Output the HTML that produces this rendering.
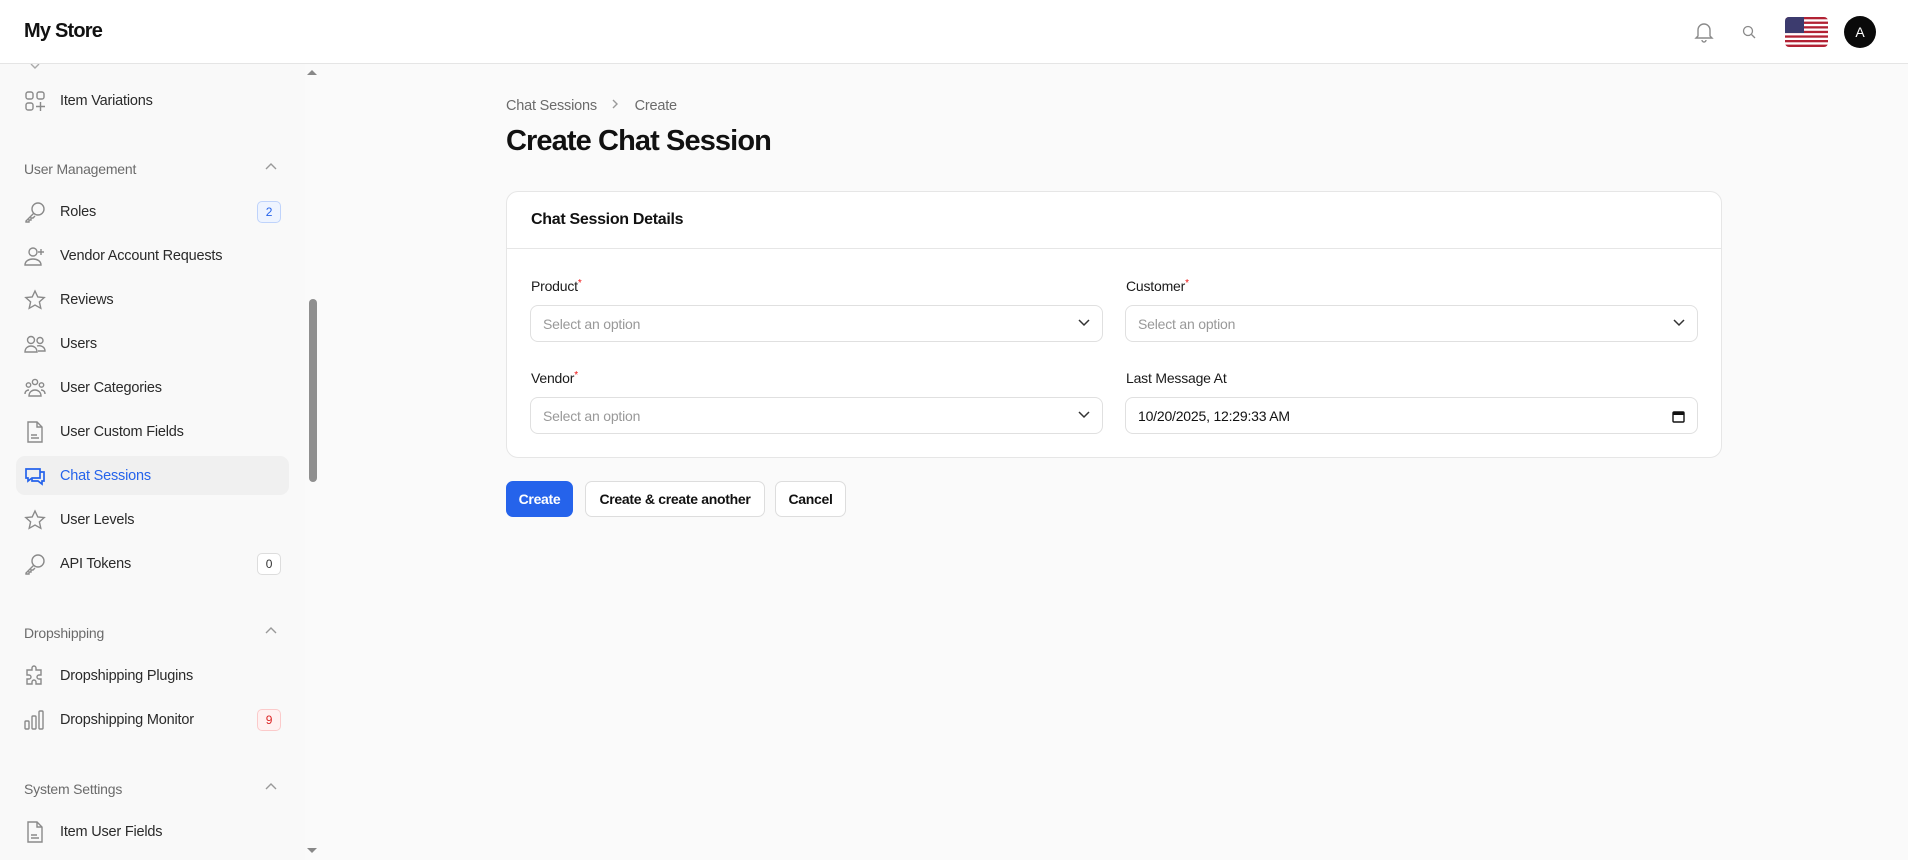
<!DOCTYPE html>
<html><head><meta charset="utf-8"><style>
*{box-sizing:border-box;margin:0;padding:0}
body{width:1908px;height:860px;overflow:hidden;background:#fafafa;font-family:"Liberation Sans",sans-serif;color:#111;position:relative}
.hdr{position:absolute;left:0;top:0;width:1908px;height:64px;background:#fff;border-bottom:1px solid #e5e5e5}
.logo{position:absolute;left:24px;top:20px;font-size:20px;font-weight:bold;letter-spacing:-0.8px}
.side{position:absolute;left:0;top:64px;width:305px;height:796px;background:#f9f9f9}
.sb{position:absolute;left:305px;top:64px;width:12px;height:796px;background:#fafafa}
.thumb{position:absolute;left:309px;top:299px;width:8px;height:183px;background:#8f8f8f;border-radius:4px}
.it{position:absolute;left:16px;width:273px;height:39px;font-size:14.5px;color:#2a2a2a;letter-spacing:-0.2px}
.it svg{position:absolute;left:8px;top:9px}
.it span{position:absolute;left:44px;top:12px}
.it.act{background:#f0f0f0;border-radius:9px;color:#2563eb}
.grp{position:absolute;left:24px;font-size:14px;color:#6b6b6b;letter-spacing:-0.2px}
.car{position:absolute;left:265px}
.badge{position:absolute;left:241px;top:9px;width:24px;height:22px;border:1px solid #ddd;border-radius:5px;font-size:12px;text-align:center;line-height:20px;color:#333;background:#fff}
.main{position:absolute;left:506px}
.card{position:absolute;left:506px;top:191px;width:1216px;height:267px;background:#fff;border:1px solid #e6e6e6;border-radius:12px}
.lbl{position:absolute;font-size:14px;color:#1a1a1a;letter-spacing:-0.2px}
.lbl i{color:#e11;font-style:normal;font-size:10px;vertical-align:top}
.inp{position:absolute;width:573px;height:37px;border:1px solid #e0e0e0;border-radius:8px;background:#fff;font-size:14px;color:#999;letter-spacing:-0.2px}
.inp span{position:absolute;left:12px;top:10px}
.inp svg{position:absolute;right:12px;top:13px}
.btn{position:absolute;top:481px;height:36px;border-radius:7px;font-size:14px;font-weight:bold;line-height:34px;text-align:center;border:1px solid #ddd;background:#fff;letter-spacing:-0.3px}
</style></head><body>
<div class="hdr"><div class="logo">My Store</div>
<svg style="position:absolute;left:1694px;top:20px" width="20" height="24" viewBox="0 0 20 24" fill="none" stroke="#8a8a8a" stroke-width="1.4"><path d="M4 16V10a6 6 0 0 1 12 0v6l2 2H2z"/><path d="M8 20a2 2 0 0 0 4 0"/></svg>
<svg style="position:absolute;left:1742px;top:25px" width="15" height="15" viewBox="0 0 15 15" fill="none" stroke="#8a8a8a" stroke-width="1.3"><circle cx="6" cy="6" r="4.5"/><path d="M9.5 9.5L13 13"/></svg>
<svg style="position:absolute;left:1785px;top:17px" width="43" height="30" viewBox="0 0 43 30"><defs><clipPath id="c"><rect width="43" height="30" rx="4"/></clipPath></defs><g clip-path="url(#c)"><rect width="43" height="30" fill="#fff"/><g fill="#b22234"><rect y="0" width="43" height="2.3"/><rect y="4.6" width="43" height="2.3"/><rect y="9.2" width="43" height="2.3"/><rect y="13.8" width="43" height="2.3"/><rect y="18.4" width="43" height="2.3"/><rect y="23" width="43" height="2.3"/><rect y="27.6" width="43" height="2.4"/></g><rect width="19" height="16" fill="#3c3b6e"/></g></svg>
<div style="position:absolute;left:1844px;top:16px;width:32px;height:32px;border-radius:50%;background:#0a0a0a;color:#fff;font-size:14px;text-align:center;line-height:32px">A</div>
</div>
<div class="side">
<svg style="position:absolute;left:29px;top:0" width="12" height="6"><path d="M2 0l4 4 4-4" fill="none" stroke="#aaa" stroke-width="1.4"/></svg>
</div>
<div class="sb"></div><div class="thumb"></div>
<svg style="position:absolute;left:307px;top:69px" width="10" height="7"><path d="M0 6h10L5 1z" fill="#888"/></svg>
<svg style="position:absolute;left:307px;top:847px" width="10" height="7"><path d="M0 1h10L5 6z" fill="#888"/></svg>

<div class="it" style="top:81px"><svg width="22" height="22" viewBox="0 0 22 22" fill="none" stroke="#8a8a8a" stroke-width="1.4"><rect x="2" y="2" width="7" height="7" rx="2"/><rect x="13" y="2" width="7" height="7" rx="2"/><rect x="2" y="13" width="7" height="7" rx="2"/><path d="M16.5 12v9M12 16.5h9"/></svg><span>Item Variations</span></div>

<div class="grp" style="top:161px">User Management</div>
<svg class="car" style="top:162px" width="12" height="8"><path d="M1 7l5-5 5 5" fill="none" stroke="#999" stroke-width="1.4"/></svg>
<div class="it" style="top:192px"><svg width="22" height="22" viewBox="0 0 22 22" fill="none" stroke="#8a8a8a" stroke-width="1.4"><circle cx="14" cy="8" r="6"/><path d="M10 12l-8 8v1h3v-2h2v-2h2l2-2"/></svg><span>Roles</span><div class="badge" style="color:#2563eb;background:#eef4ff;border-color:#bfd3fb">2</div></div>
<div class="it" style="top:236px"><svg width="22" height="22" viewBox="0 0 22 22" fill="none" stroke="#8a8a8a" stroke-width="1.4"><circle cx="9" cy="7" r="4"/><path d="M1 20c0-4 4-6 8-6s8 2 8 6z"/><path d="M17 4v6M14 7h6"/></svg><span>Vendor Account Requests</span></div>
<div class="it" style="top:280px"><svg width="22" height="22" viewBox="0 0 22 22" fill="none" stroke="#8a8a8a" stroke-width="1.4"><path d="M11 2l2.8 6 6.4.6-4.8 4.3 1.4 6.4L11 16l-5.8 3.3 1.4-6.4L1.8 8.6 8.2 8z"/></svg><span>Reviews</span></div>
<div class="it" style="top:324px"><svg width="22" height="22" viewBox="0 0 22 22" fill="none" stroke="#8a8a8a" stroke-width="1.4"><circle cx="7" cy="7" r="3.5"/><circle cx="16" cy="7.5" r="3"/><path d="M1 19c0-4 3-6 6-6s6 2 6 6zM13 13c4-1 8 1 8 5h-7"/></svg><span>Users</span></div>
<div class="it" style="top:368px"><svg width="22" height="22" viewBox="0 0 22 22" fill="none" stroke="#8a8a8a" stroke-width="1.4"><circle cx="11" cy="5" r="2.6"/><circle cx="4.5" cy="8" r="2.2"/><circle cx="17.5" cy="8" r="2.2"/><path d="M5 19c0-4 3-6 6-6s6 2 6 6zM1 17c0-3 2-4 4-4M21 17c0-3-2-4-4-4"/></svg><span>User Categories</span></div>
<div class="it" style="top:412px"><svg width="22" height="22" viewBox="0 0 22 22" fill="none" stroke="#8a8a8a" stroke-width="1.4"><path d="M4 1h9l5 5v15H4z"/><path d="M13 1v5h5M7 14h6M7 17h8"/></svg><span>User Custom Fields</span></div>
<div class="it act" style="top:456px"><svg width="22" height="22" viewBox="0 0 22 22" fill="none" stroke="#2563eb" stroke-width="1.7"><path d="M2 4h14v9H8l-4 3v-3H2z"/><path d="M16 7h4v9h-2v3l-4-3H8v-3"/></svg><span>Chat Sessions</span></div>
<div class="it" style="top:500px"><svg width="22" height="22" viewBox="0 0 22 22" fill="none" stroke="#8a8a8a" stroke-width="1.4"><path d="M11 2l2.8 6 6.4.6-4.8 4.3 1.4 6.4L11 16l-5.8 3.3 1.4-6.4L1.8 8.6 8.2 8z"/></svg><span>User Levels</span></div>
<div class="it" style="top:544px"><svg width="22" height="22" viewBox="0 0 22 22" fill="none" stroke="#8a8a8a" stroke-width="1.4"><circle cx="14" cy="8" r="6"/><path d="M10 12l-8 8v1h3v-2h2v-2h2l2-2"/></svg><span>API Tokens</span><div class="badge">0</div></div>

<div class="grp" style="top:625px">Dropshipping</div>
<svg class="car" style="top:626px" width="12" height="8"><path d="M1 7l5-5 5 5" fill="none" stroke="#999" stroke-width="1.4"/></svg>
<div class="it" style="top:656px"><svg width="22" height="22" viewBox="0 0 22 22" fill="none" stroke="#8a8a8a" stroke-width="1.4"><path d="M8 3a2 2 0 0 1 4 0v2h5v5h-2a2 2 0 0 0 0 4h2v5h-5v-2a2 2 0 0 0-4 0v2H3v-5h2a2 2 0 0 0 0-4H3V5h5z"/></svg><span>Dropshipping Plugins</span></div>
<div class="it" style="top:700px"><svg width="22" height="22" viewBox="0 0 22 22" fill="none" stroke="#8a8a8a" stroke-width="1.4"><rect x="1" y="12" width="4" height="8" rx="1"/><rect x="8" y="7" width="4" height="13" rx="1"/><rect x="15" y="2" width="4" height="18" rx="1"/></svg><span>Dropshipping Monitor</span><div class="badge" style="color:#dc2626;background:#fff1f1;border-color:#fbcaca">9</div></div>

<div class="grp" style="top:781px">System Settings</div>
<svg class="car" style="top:782px" width="12" height="8"><path d="M1 7l5-5 5 5" fill="none" stroke="#999" stroke-width="1.4"/></svg>
<div class="it" style="top:812px"><svg width="22" height="22" viewBox="0 0 22 22" fill="none" stroke="#8a8a8a" stroke-width="1.4"><path d="M4 1h9l5 5v15H4z"/><path d="M13 1v5h5M7 14h6M7 17h8"/></svg><span>Item User Fields</span></div>

<div class="main" style="top:98px;font-size:14.5px;color:#6b6b6b;letter-spacing:-0.2px">Chat Sessions <svg width="30" height="12" viewBox="0 0 30 12"><path d="M12 2l4 4-4 4" fill="none" stroke="#999" stroke-width="1.4"/></svg> Create</div>
<div class="main" style="top:125px;font-size:29px;font-weight:bold;letter-spacing:-0.9px">Create Chat Session</div>

<div class="card">
<div style="position:absolute;left:24px;top:19px;font-size:16px;font-weight:bold;letter-spacing:-0.3px">Chat Session Details</div>
<div style="position:absolute;left:0;right:0;top:56px;border-top:1px solid #e6e6e6"></div>
<div class="lbl" style="left:24px;top:86px">Product<i>*</i></div>
<div class="lbl" style="left:619px;top:86px">Customer<i>*</i></div>
<div class="inp" style="left:23px;top:113px"><span>Select an option</span><svg width="12" height="8"><path d="M1 1l5 5 5-5" fill="none" stroke="#333" stroke-width="1.5"/></svg></div>
<div class="inp" style="left:618px;top:113px"><span>Select an option</span><svg width="12" height="8"><path d="M1 1l5 5 5-5" fill="none" stroke="#333" stroke-width="1.5"/></svg></div>
<div class="lbl" style="left:24px;top:178px">Vendor<i>*</i></div>
<div class="lbl" style="left:619px;top:178px">Last Message At</div>
<div class="inp" style="left:23px;top:205px"><span>Select an option</span><svg width="12" height="8"><path d="M1 1l5 5 5-5" fill="none" stroke="#333" stroke-width="1.5"/></svg></div>
<div class="inp" style="left:618px;top:205px;color:#111"><span>10/20/2025, 12:29:33 AM</span><svg width="13" height="13" viewBox="0 0 13 13" style="top:12px"><rect x="1" y="2" width="11" height="10" rx="1" fill="none" stroke="#111" stroke-width="1.4"/><rect x="1" y="2" width="11" height="3" fill="#111"/></svg></div>
</div>

<div class="btn" style="left:506px;width:67px;background:#2563eb;color:#fff;border-color:#2563eb">Create</div>
<div class="btn" style="left:585px;width:180px">Create &amp; create another</div>
<div class="btn" style="left:775px;width:71px">Cancel</div>
</body></html>
